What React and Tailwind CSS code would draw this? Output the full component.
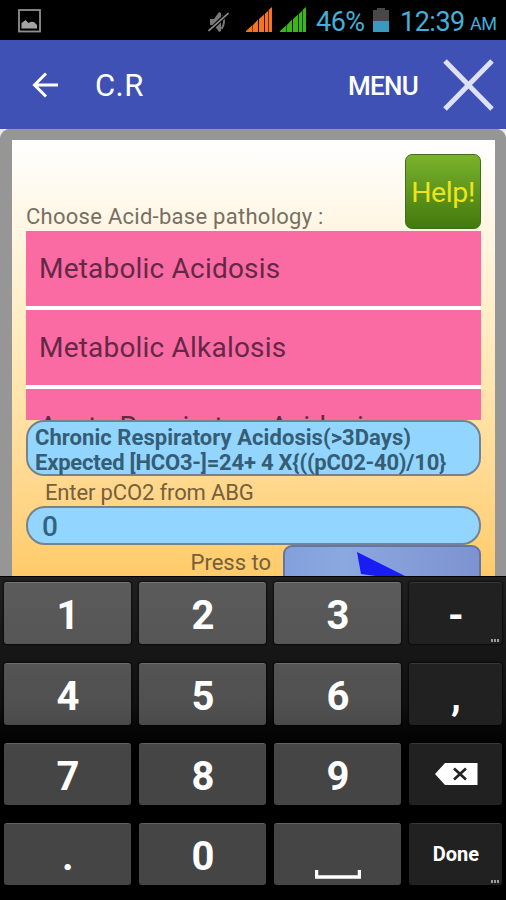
import clsx from 'clsx'

const pathologies = ['Metabolic Acidosis', 'Metabolic Alkalosis', 'Acute Respiratory Acidosis']

const formula = 'Expected [HCO3-]=24+ 4 X{((pC02-40)/10}'

const keys = [
  ['1', '2', '3', '-'],
  ['4', '5', '6', ','],
  ['7', '8', '9', 'back'],
  ['.', '0', 'space', 'Done'],
]

function Signal({ color }) {
  return (
    <svg width="27" height="26" viewBox="0 0 27 26" fill={color}>
      <path d="M0 25 V24 L6.500 18 V25Z M7 18 L12 12.500 V25 H7Z M13 12 L18 7.500 V25 H13Z M18.800 7 L22 4 V25 H18.800Z M22.600 3 L26 0 V25 H22.600Z" />
    </svg>
  )
}

function StatusBar() {
  return (
    <div className="flex h-10 shrink-0 items-start bg-black text-[27px] leading-none text-[#42b0d8]">
      <svg className="mt-[9px] ml-[18px]" width="23" height="24" viewBox="0 0 23 24">
        <rect x="1" y="1" width="21" height="21.500" fill="none" stroke="#8f8f8f" strokeWidth="1.800" />
        <path d="M3.500 19.500 V14 L5 13 L7.500 11 L10.500 14 L13 12.800 L16 13 L19 16 V19.500Z" fill="#a3a3a3" />
      </svg>
      <svg className="mt-[11px] ml-[167px]" width="21" height="22" viewBox="0 0 21 22">
        <path d="M2 8 H6 L11 1 L13 2 V20 L11 21 L6 14 H2Z" fill="#777" />
        <path d="M14.500 4 Q18 11 13.500 18" fill="none" stroke="#777" strokeWidth="2" />
        <path d="M1 20 L20 2" stroke="#000" strokeWidth="4" />
        <path d="M0.500 20 L20.500 2" stroke="#8c8c8c" strokeWidth="1.600" />
      </svg>
      <div className="mt-[7px] ml-[17px]"><Signal color="#f5741d" /></div>
      <div className="mt-[7px] ml-[7px]"><Signal color="#3cb814" /></div>
      <span className="mt-[9px] ml-[9px] w-[57px] tracking-[-0.5px]">46%</span>
      <svg className="mt-[7px]" width="16" height="26" viewBox="0 0 16 26">
        <path d="M4 1 H12 V3 H16 V14 H0 V3 H4Z" fill="#484848" />
        <path d="M0 14 H16 V25 H0Z" fill="#399abf" />
      </svg>
      <span className="mt-[9px] ml-[11px] w-[70px] tracking-[-0.5px]">12:39</span>
      <span className="mt-[15px] text-[18px] tracking-[-0.6px]">AM</span>
    </div>
  )
}

function AppBar() {
  return (
    <div className="flex h-[89px] shrink-0 items-center bg-[#3f51b5] text-white">
      <svg className="ml-[32px]" width="27" height="26" viewBox="0 0 27 26" fill="none" stroke="#fff" strokeWidth="3">
        <path d="M14 1.500 L2.500 13 L14 24.500 M2.500 13 H26" />
      </svg>
      <span className="mt-[4px] ml-[36px] text-[31px] tracking-[0.4px]">C.R</span>
      <span className="mt-[3px] ml-auto text-[26px] font-medium tracking-[-0.7px]">MENU</span>
      <svg className="mr-[12px] ml-[25px]" width="51" height="52" viewBox="0 0 51 52" stroke="#dce1f5" strokeWidth="5">
        <path d="M2 2 L49 50 M49 2 L2 50" />
      </svg>
    </div>
  )
}

function Key({ value }) {
  const dark = ['-', ',', 'back', 'Done'].includes(value)
  return (
    <div
      className={clsx(
        'relative flex items-center justify-center rounded-[3px] border-t font-bold text-white shadow-[0_0_2px_1px_rgba(0,0,0,0.6)]',
        dark ? 'border-[#383838] bg-[#212121]' : 'border-white/15 bg-white/27',
        value === 'Done' ? 'text-[20px]' : 'text-[40px]'
      )}
    >
      {value === 'back' && (
        <svg className="ml-[2px]" width="43" height="22" viewBox="0 0 43 22">
          <path d="M0 11 L10 0 H42.500 V22 H10Z" fill="#fff" />
          <path d="M19 5.500 L31 16.500 M31 5.500 L19 16.500" stroke="#222" strokeWidth="2.600" />
        </svg>
      )}
      {value === 'space' && (
        <svg className="mt-[41px]" width="46" height="10" viewBox="0 0 46 10">
          <path d="M1.500 0 V7 H44.500 V0" fill="none" stroke="#fff" strokeWidth="3.500" />
        </svg>
      )}
      {value !== 'back' && value !== 'space' && (
        <span className={clsx('leading-none', value !== 'Done' && 'mt-[5px]')}>{value}</span>
      )}
      {(value === '-' || value === 'Done') && (
        <div className="absolute right-[3px] bottom-[2px] flex gap-px">
          <i className="h-[3px] w-[2px] bg-[#999]" />
          <i className="h-[3px] w-[2px] bg-[#999]" />
          <i className="h-[3px] w-[2px] bg-[#999]" />
        </div>
      )}
    </div>
  )
}

function Keyboard() {
  return (
    <div className="grid h-[324px] shrink-0 grid-cols-[127px_127px_127px_93px] grid-rows-[62px_62px_62px_62px] gap-x-[8px] gap-y-[18.200px] border-t border-black bg-linear-to-b from-[#202020] via-[#101010] via-40% to-black to-65% pt-[5.400px] pl-[4.400px]">
      {keys.flat().map((k) => (
        <Key key={k} value={k} />
      ))}
    </div>
  )
}

export default function App() {
  return (
    <div className="flex h-[900px] w-[506px] flex-col overflow-hidden bg-[#e8e8f0] font-[Roboto,sans-serif]">
      <StatusBar />
      <AppBar />

      {/* Form */}
      <div className="h-[447px] shrink-0 overflow-hidden">
        <div className="h-[480px] rounded-t-[10px] border-x-[12px] border-t-[11px] border-[#969696] border-r-[11px]">
          <div className="h-[436px] bg-linear-to-b from-white via-[#ffe9b9] via-50% to-[#ffcb69] pr-[14px] pl-[14px]">
            <div className="flex h-[90.500px] items-end justify-between">
              <span className="mb-[1px] text-[22px] leading-[26px] tracking-[0.270px] whitespace-nowrap text-[#776f62]">
                Choose Acid-base pathology :
              </span>
              <div className="mb-[2px] flex h-[75px] w-[76px] items-center justify-center rounded-[7px] border border-[#3f6f18] bg-linear-to-b from-[#7ab22c] to-[#437a0c] pt-[5px] text-[28.500px] tracking-[-0.4px] text-[#efe31c]">
                Help!
              </div>
            </div>

            <div className="flex h-[189.500px] flex-col gap-[4px] overflow-hidden bg-white">
              {pathologies.map((name) => (
                <div key={name} className="flex h-[75px] shrink-0 items-center bg-[#fa6ba4] pt-[2px] pl-[13px] text-[28px] tracking-[0.200px] text-[#642846]">
                  {name}
                </div>
              ))}
            </div>

            <div className="h-[56px] rounded-[18px] border-2 border-[#77828c] bg-[#92d6ff] pt-[3px] pl-[7px] text-[22px] leading-[25px] font-bold whitespace-nowrap text-[#365d74]">
              <p className="tracking-[0.050px]">Chronic Respiratory Acidosis(&gt;3Days)</p>
              <p className="tracking-[-0.210px]">{formula}</p>
            </div>

            <p className="h-[30px] pt-[4px] pl-[19px] text-[22px] leading-[26px] tracking-[-0.140px] text-[#75603c]">Enter pCO2 from ABG</p>

            <div className="flex h-[39px] items-center rounded-[19px] border-2 border-[#77828c] bg-[#92d6ff] pt-[3px] pl-[14px] text-[28px] font-medium text-[#33647f]">
              0
            </div>

            <div className="flex justify-end">
              <span className="mt-[5px] mr-[12px] text-[22px] leading-[26px] text-[#75603c]">Press to</span>
              <div className="h-[60px] w-[198px] rounded-[9px] border-2 border-[#6575a4] bg-linear-to-r from-[#82a0db] via-[#8ca8e0] via-30% to-[#7c93cf]">
                <svg className="mt-[5px] ml-[71px]" width="60" height="32" viewBox="0 0 60 32">
                  <path d="M1 0 L60 29.500 L5 22Z" fill="#1a1cf5" />
                </svg>
              </div>
            </div>
          </div>
        </div>
      </div>

      <Keyboard />
    </div>
  )
}
